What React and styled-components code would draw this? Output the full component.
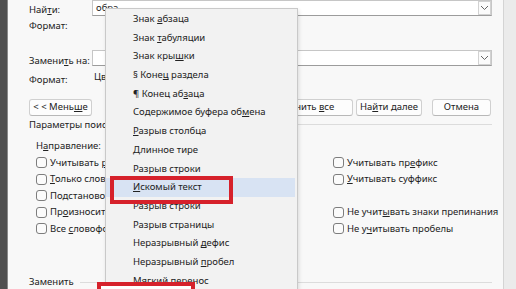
import React from "react";
import styled, { createGlobalStyle } from "styled-components";

const GlobalStyle = createGlobalStyle`
  html, body {
    margin: 0;
    padding: 0;
    overflow: hidden;
  }
  body {
    font-family: "Noto Sans", "Open Sans", sans-serif;
    font-size: 9.5px;
    color: #222222;
  }
`;

const Page = styled.div`
  position: relative;
  display: flex;
  width: 516px;
  height: 289px;
  overflow: hidden;
`;

const LeftEdge = styled.div`
  width: 7px;
  flex-shrink: 0;
  background: #505050;
  border-right: 1px solid #8a8a8a;
`;

const RightEdge = styled.div`
  width: 12px;
  flex-shrink: 0;
  background: #ebebeb;
  border-left: 1px solid #d4d4d4;
`;

const Dialog = styled.div`
  flex: 1;
  min-width: 0;
  display: flex;
  flex-direction: column;
  padding: 0 11px 0 21px;
  background: #f8f8f8;
`;

const FieldRow = styled.div`
  display: flex;
  align-items: flex-start;
  height: ${(p) => p.$h}px;
  margin-top: ${(p) => p.$mt || 0}px;
`;

const Label = styled.div`
  width: 63px;
  flex-shrink: 0;
  line-height: 14px;
  margin-top: ${(p) => p.$dy || 0}px;
  white-space: nowrap;
`;

const Note = styled.div`
  line-height: 14px;
  padding-left: 2px;
  white-space: nowrap;
`;

const Input = styled.div`
  flex: 1;
  min-width: 0;
  height: 16px;
  box-sizing: border-box;
  display: flex;
  align-items: center;
  justify-content: space-between;
  padding: 0 0 0 3px;
  background: #ffffff;
  border: 1px solid #c6c6c6;
  border-bottom-color: #9c9c9c;
  line-height: 14px;
`;

const DropButton = styled.div`
  width: 13px;
  height: 14px;
  box-sizing: border-box;
  display: flex;
  align-items: center;
  justify-content: center;
  border: 1px solid #d2d2d2;
  background: #fbfbfb;
`;

const ButtonRow = styled.div`
  display: flex;
  align-items: center;
  height: 17px;
  margin-top: 11px;
`;

const Button = styled.div`
  width: ${(p) => p.$w}px;
  height: 17px;
  box-sizing: border-box;
  flex-shrink: 0;
  margin-left: ${(p) => p.$ml || 0}px;
  display: flex;
  align-items: center;
  justify-content: center;
  background: #fdfdfd;
  border: 1px solid #d0d0d0;
  border-bottom-color: #b8b8b8;
  border-radius: 3px;
  line-height: 14px;
  white-space: nowrap;
`;

const GroupHeader = styled.div`
  display: flex;
  align-items: center;
  gap: 6px;
  height: 14px;
  margin-top: ${(p) => p.$mt}px;
  line-height: 14px;
  white-space: nowrap;

  &::after {
    content: "";
    flex: 1;
    height: 1px;
    background: #dcdcdc;
  }
`;

const SubHeader = styled.div`
  height: 14px;
  line-height: 14px;
  margin-top: 7px;
  padding-left: 7px;
`;

const OptionGrid = styled.div`
  display: grid;
  grid-template-columns: 297px minmax(0, 1fr);
  grid-template-rows: repeat(5, 16.5px);
  grid-auto-flow: column;
  margin-top: 2px;
  padding-left: 7px;
`;

const Option = styled.div`
  display: flex;
  align-items: center;
  gap: 3px;
  white-space: nowrap;
  line-height: 14px;
`;

const Box = styled.span`
  width: 11px;
  height: 11px;
  box-sizing: border-box;
  border: 1px solid #7d7d7d;
  border-radius: 3px;
  background: #fbfbfb;
  flex-shrink: 0;
`;

const U = styled.span`
  text-decoration: underline;
  text-underline-offset: 1px;
`;

const Menu = styled.div`
  position: absolute;
  left: 105px;
  top: 8px;
  width: 191px;
  padding-top: 1px;
  background: #f2f2f2;
  border: 1px solid #c9c9c9;
  box-shadow: 1px 2px 4px rgba(0, 0, 0, 0.12);
`;

const MenuItem = styled.div`
  height: 18.7px;
  line-height: 18.7px;
  padding-left: 27px;
  margin-right: 2px;
  white-space: nowrap;
  background: ${(p) => (p.$active ? "#d8e3f3" : "transparent")};
`;

const Mark = styled.div`
  position: absolute;
  left: ${(p) => p.$x}px;
  top: ${(p) => p.$y}px;
  width: ${(p) => p.$w}px;
  height: ${(p) => p.$h}px;
  box-sizing: border-box;
  border: 4px solid #d6212b;
  background: ${(p) => p.$fill || "transparent"};
`;

const Chevron = () => (
  <svg width="9" height="6" viewBox="0 0 9 6">
    <polyline points="1,1 4.5,4.5 8,1" fill="none" stroke="#666" strokeWidth="1" />
  </svg>
);

const leftOptions = [
  <>Учитывать <U>р</U>егистр</>,
  <><U>Т</U>олько слово целиком</>,
  <>Подстановочные знаки</>,
  <>Пр<U>о</U>износится как</>,
  <>Все <U>с</U>ловоформы</>,
];

const rightOptions = [
  <>Учитывать пр<U>е</U>фикс</>,
  <><U>У</U>читывать суффикс</>,
  null,
  <>Не учит<U>ы</U>вать знаки препинания</>,
  <>Не у<U>ч</U>итывать пробелы</>,
];

const menuItems = [
  <>Знак <U>а</U>бзаца</>,
  <>Знак <U>т</U>абуляции</>,
  <>Знак кры<U>ш</U>ки</>,
  <>§ Коне<U>ц</U> раздела</>,
  <>¶ Конец аб<U>з</U>аца</>,
  <>Содержимое буфера об<U>м</U>ена</>,
  <><U>Р</U>азрыв столбца</>,
  <><U>Д</U>линное тире</>,
  <>Разрыв строки</>,
  <><U>И</U>скомый текст</>,
  <>Разрыв строки</>,
  <>Разрыв страницы</>,
  <>Неразрывный <U>д</U>ефис</>,
  <>Неразрывный <U>п</U>робел</>,
  <>Мягкий перенос</>,
];

export default function App() {
  return (
    <>
      <GlobalStyle />
      <Page>
        <LeftEdge />
        <Dialog>
          <FieldRow $h={16}>
            <Label $dy={3}>
              Най<U>т</U>и:
            </Label>
            <Input>
              <span>обра</span>
              <DropButton>
                <Chevron />
              </DropButton>
            </Input>
          </FieldRow>
          <FieldRow $h={18}>
            <Label $dy={3}>Формат:</Label>
          </FieldRow>
          <FieldRow $h={16} $mt={16}>
            <Label $dy={4}>
              Замени<U>т</U>ь на:
            </Label>
            <Input>
              <span />
              <DropButton>
                <Chevron />
              </DropButton>
            </Input>
          </FieldRow>
          <FieldRow $h={18} $mt={4}>
            <Label $dy={3}>Формат:</Label>
            <Note>Цвет шрифта</Note>
          </FieldRow>
          <ButtonRow>
            <Button $w={63}>
              <span>
                &lt; &lt; Мень<U>ш</U>е
              </span>
            </Button>
            <Button $w={100} $ml={161}>
              <span>
                Заменить <U>в</U>се
              </span>
            </Button>
            <Button $w={66} $ml={3}>
              <span>
                На<U>й</U>ти далее
              </span>
            </Button>
            <Button $w={59} $ml={10}>
              <span>Отмена</span>
            </Button>
          </ButtonRow>
          <GroupHeader $mt={2}>
            <span>Параметры поиска</span>
          </GroupHeader>
          <SubHeader>
            Н<U>а</U>правление:
          </SubHeader>
          <OptionGrid>
            {leftOptions.map((t, i) => (
              <Option key={"l" + i}>
                <Box />
                <span>{t}</span>
              </Option>
            ))}
            {rightOptions.map((t, i) =>
              t ? (
                <Option key={"r" + i}>
                  <Box />
                  <span>{t}</span>
                </Option>
              ) : (
                <Option key={"r" + i} />
              )
            )}
          </OptionGrid>
          <GroupHeader $mt={38}>
            <span>Заменить</span>
          </GroupHeader>
        </Dialog>
        <RightEdge />

        <Menu>
          {menuItems.map((t, i) => (
            <MenuItem key={i} $active={i === 9}>
              {t}
            </MenuItem>
          ))}
        </Menu>
        <Mark $x={110} $y={176} $w={123} $h={28} />
        <Mark $x={97} $y={282} $w={98} $h={20} $fill="#ffffff" />
      </Page>
    </>
  );
}
